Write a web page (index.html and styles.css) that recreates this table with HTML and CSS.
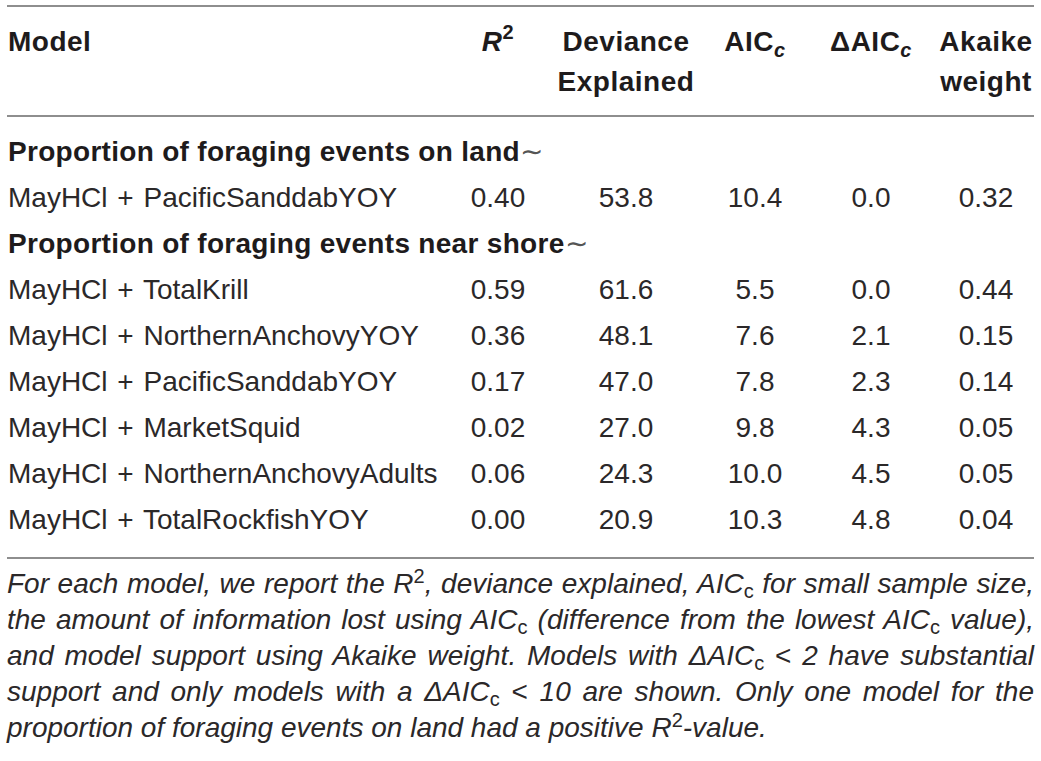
FILE: index.html
```html
<!DOCTYPE html>
<html lang="en">
<head>
  <meta charset="UTF-8" />
  <meta name="viewport" content="width=device-width, initial-scale=1" />
  <title>Model selection results</title>
  <link rel="stylesheet" href="styles.css">
</head>
<body>
  <div class="figure">
    <table class="results">
      <colgroup>
        <col class="col-model" />
        <col class="col-r2" />
        <col class="col-dev" />
        <col class="col-aic" />
        <col class="col-daic" />
        <col class="col-weight" />
      </colgroup>
      <thead>
        <tr>
          <th class="name">Model</th>
          <th><i>R</i><sup>2</sup></th>
          <th>Deviance<br />Explained</th>
          <th>AIC<sub><i>c</i></sub></th>
          <th>&Delta;AIC<sub><i>c</i></sub></th>
          <th class="last">Akaike<br />weight</th>
        </tr>
      </thead>
      <tbody>
        <tr class="group">
          <td colspan="6">Proportion of foraging events on land<span class="tilde">&sim;</span></td>
        </tr>
        <tr>
          <td class="name">MayHCl + PacificSanddabYOY</td>
          <td>0.40</td><td>53.8</td><td>10.4</td><td>0.0</td><td class="last">0.32</td>
        </tr>
        <tr class="group">
          <td colspan="6">Proportion of foraging events near shore<span class="tilde">&sim;</span></td>
        </tr>
        <tr>
          <td class="name">MayHCl + TotalKrill</td>
          <td>0.59</td><td>61.6</td><td>5.5</td><td>0.0</td><td class="last">0.44</td>
        </tr>
        <tr>
          <td class="name">MayHCl + NorthernAnchovyYOY</td>
          <td>0.36</td><td>48.1</td><td>7.6</td><td>2.1</td><td class="last">0.15</td>
        </tr>
        <tr>
          <td class="name">MayHCl + PacificSanddabYOY</td>
          <td>0.17</td><td>47.0</td><td>7.8</td><td>2.3</td><td class="last">0.14</td>
        </tr>
        <tr>
          <td class="name">MayHCl + MarketSquid</td>
          <td>0.02</td><td>27.0</td><td>9.8</td><td>4.3</td><td class="last">0.05</td>
        </tr>
        <tr>
          <td class="name">MayHCl + NorthernAnchovyAdults</td>
          <td>0.06</td><td>24.3</td><td>10.0</td><td>4.5</td><td class="last">0.05</td>
        </tr>
        <tr>
          <td class="name">MayHCl + TotalRockfishYOY</td>
          <td>0.00</td><td>20.9</td><td>10.3</td><td>4.8</td><td class="last">0.04</td>
        </tr>
      </tbody>
    </table>

    <p class="caption">
      <span class="line">For each model, we report the <i>R</i><sup>2</sup>, deviance explained, AIC<sub>c</sub> for small sample size,</span>
      <span class="line">the amount of information lost using AIC<sub>c</sub> (difference from the lowest AIC<sub>c</sub> value),</span>
      <span class="line">and model support using Akaike weight. Models with &Delta;AIC<sub>c</sub> <span class="op">&lt;</span> 2 have substantial</span>
      <span class="line">support and only models with a &Delta;AIC<sub>c</sub> <span class="op">&lt;</span> 10 are shown. Only one model for the</span>
      <span class="line end">proportion of foraging events on land had a positive <i>R</i><sup>2</sup>-value.</span>
    </p>
  </div>
</body>
</html>
```

FILE: styles.css
```css
body {
  margin: 0;
  background: #fff;
  color: #2b2829;
  font-family: "Liberation Sans", Arial, sans-serif;
}
.figure {
  width: 1027px;
  padding: 5px 7px 0;
}
.results {
  width: 1027px;
  border-collapse: collapse;
  border-top: 2px solid #8e8e8e;
  border-bottom: 2px solid #8e8e8e;
  font-size: 28px;
  table-layout: fixed;
}
.col-model { width: 433px; }
.col-r2 { width: 116px; }
.col-dev { width: 140px; }
.col-aic { width: 118px; }
.col-daic { width: 114px; }
.col-weight { width: 106px; }

th {
  font-weight: bold;
  color: #1e1b1c;
  letter-spacing: 0.5px;
  line-height: 40px;
  padding: 15px 0 13px;
  vertical-align: top;
  text-align: center;
  border-bottom: 2px solid #8e8e8e;
}
th sub {
  font-size: 20px;
  line-height: 0;
  vertical-align: -6px;
}
th sup {
  font-size: 20px;
  line-height: 0;
  vertical-align: 12px;
}
td {
  line-height: 46px;
  padding: 0;
  text-align: center;
  white-space: nowrap;
}
.results .name {
  text-align: left;
  padding-left: 1px;
  word-spacing: 2px;
}
.results .last {
  padding-left: 10px;
}
.group td {
  text-align: left;
  font-weight: bold;
  color: #1e1b1c;
  letter-spacing: 0.3px;
  padding-left: 1px;
}
.tilde {
  font-weight: normal;
  color: #555;
}
tbody tr:first-child td {
  padding-top: 12px;
}
tbody tr:last-child td {
  padding-bottom: 14px;
}

/* Footnote under the table, justified line by line */
.caption {
  margin: 7px 0 0;
  font-style: italic;
  font-size: 28px;
  line-height: 36px;
  color: #2b2829;
}
.caption .line {
  display: block;
  white-space: nowrap;
  text-align: justify;
  text-align-last: justify;
}
.caption .line.end {
  text-align-last: left;
}
.caption sub {
  font-style: normal;
  font-size: 20px;
  line-height: 0;
  vertical-align: -5px;
}
.caption sup {
  font-style: normal;
  font-size: 20px;
  line-height: 0;
  vertical-align: 10px;
}
.caption .op {
  font-style: normal;
}
```
